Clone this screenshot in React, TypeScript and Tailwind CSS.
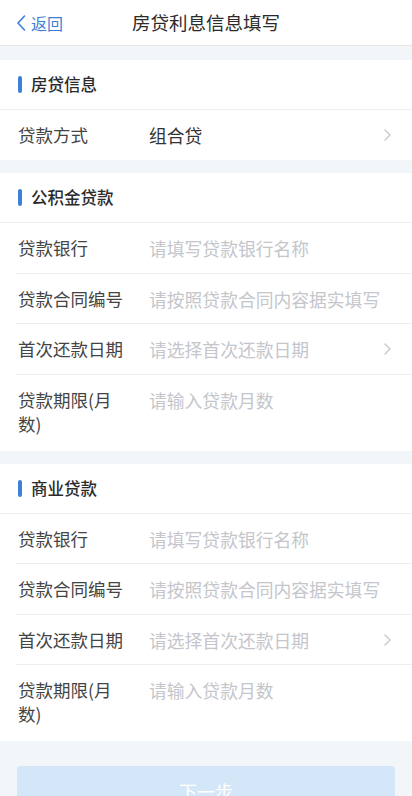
import React from "react";

const font = { fontFamily: '"Noto Sans CJK SC", "Noto Sans", sans-serif' };

function Chevron() {
  return (
    <svg width="9" height="14" viewBox="0 0 9 14" className="shrink-0">
      <path d="M2 2 L7 7 L2 12" fill="none" stroke="#c8c8cc" strokeWidth="1.4" strokeLinecap="round" strokeLinejoin="round" />
    </svg>
  );
}

function Header({ title }: { title: string }) {
  return (
    <div className="h-[50px] flex items-center pl-[18px] border-b border-[#eeeeee]">
      <div className="w-[4px] h-[17px] rounded-[2px] bg-[#3e80d8] mr-[9px]" />
      <span className="text-[16.5px] font-medium text-[#2b2b2b]">{title}</span>
    </div>
  );
}

function Row({ label, value, placeholder, arrow, last }: { label: string; value?: string; placeholder?: string; arrow?: boolean; last?: boolean }) {
  return (
    <div className={"ml-[16px] flex items-start pt-[13px] pr-[20px] " + (last ? "pb-[15px]" : "pb-[12.5px] border-b border-[#eeeeee]")}>
      <div className="w-[106px] ml-[2px] mr-[25px] text-[17.5px] leading-[24px] text-[#444444]">{label}</div>
      <div className={"flex-1 text-[17.8px] leading-[24px] " + (value ? "text-[#333333]" : "text-[#c4c6cb]")}>{value ?? placeholder}</div>
      {arrow && (
        <div className="h-[24px] flex items-center">
          <Chevron />
        </div>
      )}
    </div>
  );
}

function LoanSection({ title }: { title: string }) {
  return (
    <div className="bg-white">
      <Header title={title} />
      <Row label="贷款银行" placeholder="请填写贷款银行名称" />
      <Row label="贷款合同编号" placeholder="请按照贷款合同内容据实填写" />
      <Row label="首次还款日期" placeholder="请选择首次还款日期" arrow />
      <Row label="贷款期限(月数)" placeholder="请输入贷款月数" last />
    </div>
  );
}

export default function App() {
  return (
    <div className="w-[412px] h-[796px] overflow-hidden bg-[#f3f6f8]" style={font}>
      <div className="h-[46px] bg-white border-b border-[#e6e6e6] relative flex items-center justify-center">
        <div className="absolute left-[15px] top-0 h-full flex items-center text-[#3d7fd6]">
          <svg width="12" height="18" viewBox="0 0 12 18">
            <path d="M9.5 2 L3 9 L9.5 16" fill="none" stroke="#3d7fd6" strokeWidth="1.6" strokeLinecap="round" strokeLinejoin="round" />
          </svg>
          <span className="text-[16px] ml-[4px]">返回</span>
        </div>
        <span className="text-[18.5px] text-[#2b2b2b]">房贷利息信息填写</span>
      </div>
      <div className="h-[14px]" />
      <div className="bg-white">
        <Header title="房贷信息" />
        <div className="ml-[16px] flex items-center h-[50px] pr-[20px]">
          <div className="w-[106px] ml-[2px] mr-[25px] text-[17.5px] leading-[24px] text-[#444444]">贷款方式</div>
          <div className="flex-1 text-[17.8px] leading-[24px] text-[#333333]">组合贷</div>
          <Chevron />
        </div>
      </div>
      <div className="h-[13px]" />
      <LoanSection title="公积金贷款" />
      <div className="h-[13px]" />
      <LoanSection title="商业贷款" />
      <div className="pt-[25px] px-[17px]">
        <div className="h-[50px] rounded-[4px] bg-[#d3e7f8] flex items-center justify-center text-[18px] text-white">
          下一步
        </div>
      </div>
    </div>
  );
}
